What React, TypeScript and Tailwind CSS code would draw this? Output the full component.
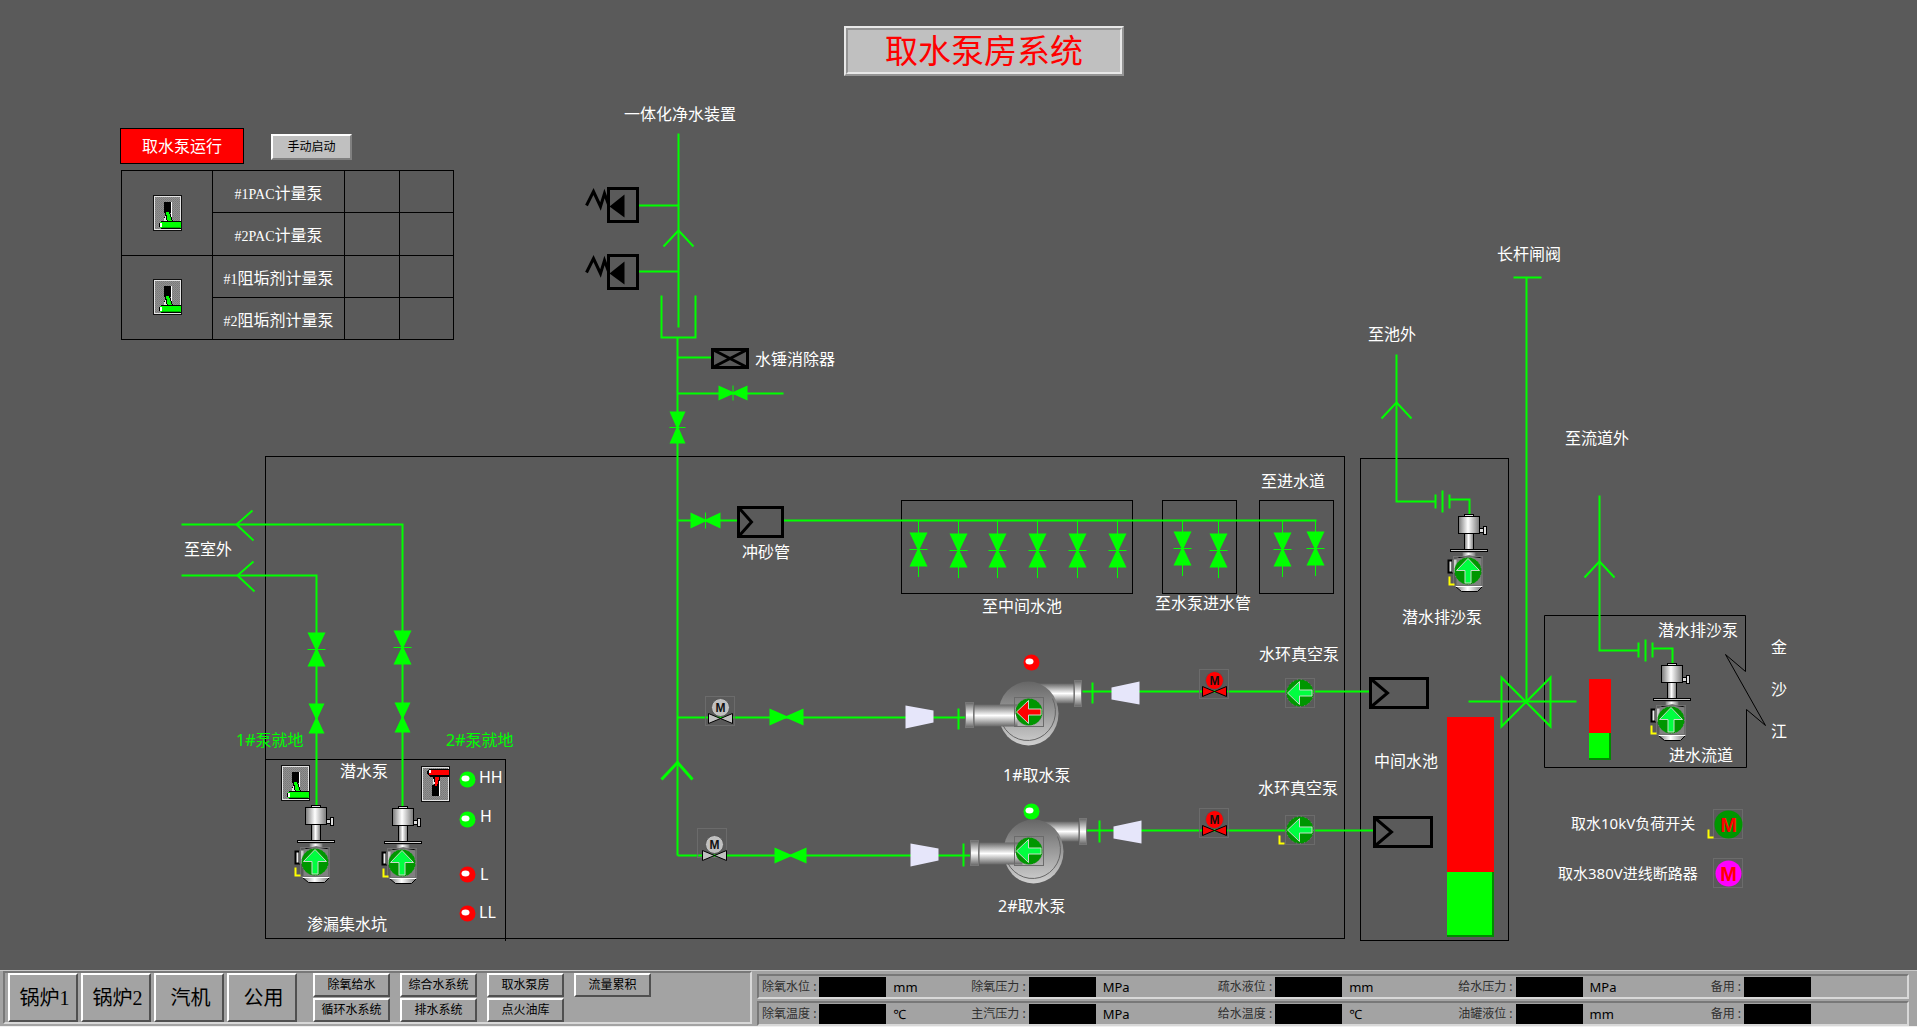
import React from "react";

const SANS = "font-['Noto_Sans','Noto_Sans_CJK_SC',sans-serif]";
const SONG = "font-['Liberation_Serif','Noto_Sans_CJK_SC',serif]";

/* ---------- symbols ---------- */

function SwitchIcon({ on }: { on: boolean }) {
  return (
    <svg width="29" height="36" viewBox="0 0 29 36" shapeRendering="crispEdges" aria-hidden="true">
      <rect width="29" height="36" fill="#101010" />
      <rect x="1" y="1" width="27" height="34" fill="#e4e4e4" />
      <rect x="2" y="2" width="25" height="32" fill="url(#dither)" />
      {on ? (
        <g>
          <rect x="11" y="7" width="7" height="11" fill="#000" />
          <rect x="18" y="7" width="1" height="20" fill="#fff" />
          <path d="M12 17h5l3 10h-9z" fill="#000" />
          <path d="M13 17h3l3 10h-4z" fill="#00ff00" />
          <path d="M12 19l2 8h-3z" fill="#e8e8e8" />
          <path d="M8 26h20v8H8l-2-2v-4z" fill="#000" />
          <rect x="7" y="27" width="21" height="6" fill="#00ff00" />
          <rect x="7" y="28" width="2" height="4" fill="#fff" />
          <rect x="9" y="32" width="18" height="1" fill="#00b000" />
        </g>
      ) : (
        <g>
          <rect x="11" y="19" width="7" height="11" fill="#000" />
          <rect x="18" y="8" width="1" height="22" fill="#fff" />
          <path d="M12 9h8l-3 12h-4z" fill="#000" />
          <path d="M14 9h5l-3 11h-2z" fill="#ff0000" />
          <path d="M12 11l2 7h-2z" fill="#e8e8e8" />
          <path d="M8 3h20v8H9l-3-3V5z" fill="#000" />
          <rect x="8" y="4" width="20" height="5" fill="#ff0000" />
          <rect x="8" y="4" width="2" height="3" fill="#fff" />
        </g>
      )}
    </svg>
  );
}

type XY = { x: number; y: number };

const ValveH = ({ x1, x2, y1, y2, tick }: { x1: number; x2: number; y1: number; y2: number; tick?: boolean }) => {
  const cx = (x1 + x2) / 2;
  const cy = (y1 + y2) / 2;
  return (
    <g fill="#00ff00">
      <path d={`M${x1} ${y1}L${cx} ${cy - 1}L${x2} ${y1}V${y2}L${cx} ${cy + 1}L${x1} ${y2}z`} />
      {tick && <path d={`M${cx} ${y1}V${y2}`} stroke="#00ff00" />}
    </g>
  );
};

const ValveV = ({ x, y, w = 9, h = 17, tick = true }: XY & { w?: number; h?: number; tick?: boolean }) => (
  <g fill="#00ff00">
    <path d={`M${x - w} ${y - h}H${x + w}L${x + 1} ${y}L${x + w} ${y + h}H${x - w}L${x - 1} ${y}z`} />
    {tick && <path d={`M${x - w} ${y}H${x + w}`} stroke="#00ff00" />}
  </g>
);

const Up = ({ x, y }: XY) => <path d={`M${x - 15} ${y + 16}L${x} ${y}L${x + 15} ${y + 16}`} />;

const Led = ({ x, y, color }: XY & { color: string }) => (
  <g>
    <circle cx={x} cy={y} r="8" fill={color} />
    <ellipse cx={x - 2} cy={y - 1} rx="4" ry="3" fill="#fff" />
  </g>
);

const LowFlag = ({ x, y }: XY) => (
  <path d={`M${x} ${y}v8h5`} fill="none" stroke="#ffff00" strokeWidth="2" />
);

const ArrowDisc = ({ x, y, color = "#00ff40", up, frame = "#6b6b6b" }: XY & { color?: string; up?: boolean; frame?: string }) => (
  <g transform={`translate(${x} ${y})`}>
    <rect width="29" height="29" fill="none" stroke={frame} />
    <circle cx="14.5" cy="14.5" r="13.5" fill="#009600" />
    <circle cx="14.5" cy="14.5" r="13.5" fill="none" stroke="#808080" strokeDasharray="1 3" />
    <path
      d="M2 14.5L14 3V11.5H26.5V17.5H14V26z"
      transform={up ? "rotate(90 14.5 14.5)" : undefined}
      fill={color}
      stroke="#c8d8c8"
    />
  </g>
);

const MotorValve = ({ x, y, color }: XY & { color: string }) => (
  <g transform={`translate(${x} ${y})`}>
    <path d="M3 17L15 22L27 17V27L15 22L3 27z" fill={color} stroke="#000" />
    <circle cx="15" cy="11" r="9" fill={color} stroke="#555" />
    <text x="15" y="15" textAnchor="middle" className="font-['Liberation_Sans',sans-serif] text-[12px] font-bold" fill="#101010">
      M
    </text>
  </g>
);

const Frame = ({ x, y }: XY) => <rect x={x} y={y} width="29" height="29" fill="none" stroke="#6b6b6b" />;

const Reducer = ({ x, y, flip }: XY & { flip?: boolean }) => (
  <path
    d={flip ? `M${x} ${y + 6}L${x + 28} ${y}V${y + 23}L${x} ${y + 18}z` : `M${x} ${y}L${x + 28} ${y + 5}V${y + 17}L${x} ${y + 23}z`}
    fill="#e6e6fa"
  />
);

const SubmersiblePump = ({ x, y, flag = -2 }: XY & { flag?: number }) => (
  <g transform={`translate(${x} ${y})`}>
    <rect x="14" y="0" width="9" height="3" fill="#ddd" stroke="#000" />
    <rect x="29" y="14" width="5" height="4" fill="#ddd" stroke="#000" />
    <rect x="33" y="12" width="3" height="8" fill="#ddd" stroke="#000" />
    <rect x="8" y="2" width="21" height="17" fill="url(#metalX)" stroke="#000" />
    <rect x="14" y="19" width="9" height="17" fill="url(#metalX)" stroke="#000" />
    <rect x="0" y="35" width="37" height="2" fill="#ccc" stroke="#000" />
    <rect x="12" y="38" width="13" height="4" fill="url(#metalX)" />
    <rect x="-2" y="46" width="4" height="12" fill="#eee" stroke="#000" strokeWidth="2" />
    <rect x="2" y="45" width="5" height="13" fill="#ccc" />
    <path d="M6 44q12 -4 25 0v27h-25z" fill="#808080" />
    <path d="M8 43q10 -3 22 0" fill="none" stroke="#000" />
    <path d="M5 72H32L27 77H11z" fill="url(#metalX)" stroke="#000" />
    <path d="M5 72H32" stroke="#fff" />
    <ArrowDisc x={3} y={42} up frame="#707070" />
    <LowFlag x={flag} y={62} />
  </g>
);

const MainPump = ({ x, y }: XY) => (
  <g transform={`translate(${x} ${y})`}>
    <path d="M64 3H108V23H70z" fill="url(#metalY)" />
    <rect x="109" y="0" width="7" height="26" fill="url(#metalY)" stroke="#777" />
    <ellipse cx="63" cy="33" rx="30" ry="32" fill="url(#casing)" />
    <path d="M87 18A27 28 0 1 1 37 44" fill="none" stroke="#666" />
    <rect x="9" y="24" width="43" height="22" fill="url(#metalY)" />
    <rect x="0" y="22" width="8" height="25" fill="url(#metalY)" stroke="#777" />
  </g>
);

const ReliefValve = ({ x, y }: XY) => (
  <g transform={`translate(${x} ${y})`} fill="none" stroke="#000" strokeWidth="3">
    <rect x="1" y="1" width="29" height="33" />
    <path d="M-21 18L-14 4L-7 19L-3 6L1 17" />
    <path d="M2 19L17 7V30z" fill="#000" stroke="none" />
  </g>
);

const Strainer = ({ x, y, w, h, tip }: XY & { w: number; h: number; tip: number }) => (
  <g fill="none" stroke="#000" strokeWidth="3">
    <rect x={x} y={y} width={w} height={h} />
    <path d={`M${x + 1} ${y + 1}L${x + tip} ${y + h / 2}L${x + 1} ${y + h - 1}`} />
  </g>
);

const Breaker = ({ x, y, fill, r }: XY & { fill: string; r: number }) => (
  <g transform={`translate(${x} ${y})`}>
    <rect width="29" height="29" fill="none" stroke="#6b6b6b" />
    <circle cx="15" cy="15" r={r} fill={fill} />
    <text x="15" y="22" textAnchor="middle" className="font-['Liberation_Sans',sans-serif] text-[20px] font-bold" fill="#ff0000">
      M
    </text>
  </g>
);

const Tank = ({ x, y, w, h, level }: XY & { w: number; h: number; level: number }) => (
  <g shapeRendering="crispEdges">
    <rect x={x} y={y} width={w} height={h - level} fill="#ff0000" />
    <rect x={x} y={y + h - level} width={w} height={level} fill="#008c00" />
    <rect x={x} y={y + h - level} width={w - 2} height={level - 2} fill="#00ff00" />
  </g>
);

/* ---------- pipework ---------- */

const dropValves = [
  [918, 549], [958, 550], [997, 550], [1037, 550], [1077, 550], [1117, 550],
  [1182, 548], [1218, 550], [1282, 549], [1315, 548],
];

function Diagram() {
  return (
    <svg className="absolute left-0 top-0 h-[970px] w-[1917px]" viewBox="0 0 1917 970" role="img" aria-label="取水泵房工艺流程">
      <defs>
        <linearGradient id="metalX">
          <stop offset="0" stopColor="#777" />
          <stop offset="0.45" stopColor="#fff" />
          <stop offset="1" stopColor="#777" />
        </linearGradient>
        <linearGradient id="metalY" x2="0" y2="1">
          <stop offset="0" stopColor="#666" />
          <stop offset="0.5" stopColor="#fff" />
          <stop offset="1" stopColor="#666" />
        </linearGradient>
        <linearGradient id="casing" x2="0" y2="1">
          <stop offset="0" stopColor="#666" />
          <stop offset="1" stopColor="#d0d0d0" />
        </linearGradient>
        <pattern id="dither" width="2" height="2" patternUnits="userSpaceOnUse">
          <rect width="2" height="2" fill="#909090" />
          <rect width="1" height="1" fill="#787878" />
          <rect x="1" y="1" width="1" height="1" fill="#808080" />
        </pattern>
      </defs>
      <g transform="translate(.5 .5)">
        {/* building outlines */}
        <g fill="none" stroke="#000" shapeRendering="crispEdges">
          <rect x="265" y="456" width="1079" height="482" />
          <path d="M265 759H505V940" />
          <rect x="901" y="500" width="231" height="93" />
          <rect x="1162" y="500" width="74" height="93" />
          <rect x="1259" y="500" width="74" height="93" />
          <rect x="1360" y="458" width="148" height="482" />
        </g>
        <path d="M1745 671V615H1544V767H1746V709L1765 725L1725 654L1745 671" fill="none" stroke="#000" />

        {/* pipes */}
        <g fill="none" stroke="#00ff00" strokeWidth="2">
          <path d="M678 133V327M638 205H678M638 271H678M661 295V337H695V295" />
          <path d="M677 337V855M677 357H711M677 393H783M677 520H737M783 520H1316" />
          <path d="M181 524H402V807M181 575H316V807" />
          <path d="M252 510L236 524L253 540M253 561L237 575L254 591" />
          <path d="M677 717H965M677 855H970M1082 691H1369M1086 830H1373" />
          <path d="M1396 354V501H1435M1449 499H1469V516M1435 494V508M1442 490V512M1449 494V508" />
          <path d="M1599 495V650H1638M1652 648H1672V665M1638 642V657M1645 639V661M1652 642V657" />
          <path d="M1513 277H1541M1526 277V701M1468 701H1576" />
          <path d="M1501 677L1550 726V677L1501 726z" />
          <path d="M661 779L677 762L692 779" strokeWidth="3" />
          <path d="M958 708V729M963 843V866M1092 682V703M1099 820V842" />
          <Up x={678} y={230} />
          <Up x={1396} y={402} />
          <Up x={1599} y={561} />
        </g>
        <path
          d={dropValves.map(([x, y]) => `M${x} 520V${y + 27}`).join("")}
          stroke="#00ff00"
          shapeRendering="crispEdges"
        />
        {dropValves.map(([x, y]) => <ValveV key={x} x={x} y={y} />)}

        <ValveH x1={718} x2={747} y1={385} y2={400} tick />
        <ValveH x1={690} x2={720} y1={512} y2={528} tick />
        <ValveH x1={769} x2={803} y1={708} y2={725} />
        <ValveH x1={774} x2={806} y1={847} y2={863} />
        <ValveV x={677} y={427} w={8} h={16} />
        <ValveV x={316} y={649} />
        <ValveV x={402} y={647} />
        <ValveV x={316} y={718} w={8} h={15} tick={false} />
        <ValveV x={402} y={717} w={8} h={15} tick={false} />

        <ReliefValve x={607} y={187} />
        <ReliefValve x={607} y={254} />
        <g fill="none" stroke="#000" strokeWidth="3">
          <rect x="712" y="349" width="35" height="18" />
          <path d="M712 349L747 367M747 349L712 367" />
        </g>
        <Strainer x={738} y={507} w={44} h={29} tip={13} />
        <Strainer x={1370} y={678} w={57} h={29} tip={17} />
        <Strainer x={1374} y={817} w={57} h={29} tip={17} />

        <Reducer x={905} y={705} />
        <Reducer x={910} y={843} />
        <Reducer x={1111} y={681} flip />
        <Reducer x={1113} y={820} flip />

        <Frame x={705} y={696} />
        <MotorValve x={705} y={696} color="#c0c0c0" />
        <Frame x={697} y={828} />
        <MotorValve x={699} y={833} color="#c0c0c0" />
        <Frame x={1199} y={669} />
        <MotorValve x={1199} y={669} color="#ff0000" />
        <Frame x={1199} y={808} />
        <MotorValve x={1199} y={808} color="#ff0000" />

        <MainPump x={965} y={680} />
        <MainPump x={970} y={818} />
        <ArrowDisc x={1014} y={697} color="#ff0000" />
        <ArrowDisc x={1014} y={836} />
        <ArrowDisc x={1285} y={678} />
        <ArrowDisc x={1285} y={815} />
        <LowFlag x={1279} y={835} />

        <SubmersiblePump x={297} y={805} />
        <SubmersiblePump x={384} y={806} flag={-1} />
        <SubmersiblePump x={1450} y={514} flag={-1} />
        <SubmersiblePump x={1653} y={663} />

        <Led x={1031} y={662} color="#ff0000" />
        <Led x={1031} y={811} color="#00ff00" />
        <Led x={467} y={779} color="#00ff00" />
        <Led x={467} y={819} color="#00ff00" />
        <Led x={467} y={874} color="#ff0000" />
        <Led x={467} y={913} color="#ff0000" />

        <Tank x={1446} y={716} w={47} h={220} level={65} />
        <Tank x={1588} y={678} w={22} h={81} level={27} />

        <Breaker x={1713} y={809} fill="#009600" r={14} />
        <Breaker x={1713} y={858} fill="#ff00ff" r={13} />
        <LowFlag x={1708} y={829} />
      </g>
    </svg>
  );
}

/* ---------- captions on the diagram ---------- */

const captions: [string, string][] = [
  ["一体化净水装置", "left-[624px] top-[103px] text-white"],
  ["水锤消除器", "left-[755px] top-[348px] text-white"],
  ["至室外", "left-[184px] top-[538px] text-white"],
  ["1#泵就地", "left-[236px] top-[729px] text-[#00ff00]"],
  ["2#泵就地", "left-[446px] top-[729px] text-[#00ff00]"],
  ["潜水泵", "left-[340px] top-[760px] text-white"],
  ["HH", "left-[479px] top-[766px] text-white"],
  ["H", "left-[480px] top-[805px] text-white"],
  ["L", "left-[480px] top-[863px] text-white"],
  ["LL", "left-[479px] top-[901px] text-white"],
  ["渗漏集水坑", "left-[307px] top-[913px] text-white"],
  ["冲砂管", "left-[742px] top-[541px] text-white"],
  ["至中间水池", "left-[982px] top-[595px] text-white"],
  ["至水泵进水管", "left-[1155px] top-[592px] text-white"],
  ["至进水道", "left-[1261px] top-[470px] text-white"],
  ["1#取水泵", "left-[1003px] top-[764px] text-white"],
  ["2#取水泵", "left-[998px] top-[895px] text-white"],
  ["水环真空泵", "left-[1259px] top-[643px] text-white"],
  ["水环真空泵", "left-[1258px] top-[777px] text-white"],
  ["长杆闸阀", "left-[1497px] top-[243px] text-white"],
  ["至池外", "left-[1368px] top-[323px] text-white"],
  ["至流道外", "left-[1565px] top-[427px] text-white"],
  ["潜水排沙泵", "left-[1402px] top-[606px] text-white"],
  ["中间水池", "left-[1374px] top-[750px] text-white"],
  ["潜水排沙泵", "left-[1658px] top-[619px] text-white"],
  ["进水流道", "left-[1669px] top-[744px] text-white"],
  ["金", "left-[1771px] top-[636px] text-white"],
  ["沙", "left-[1771px] top-[678px] text-white"],
  ["江", "left-[1771px] top-[720px] text-white"],
];

const ratings: [string, string][] = [
  ["取水10kV负荷开关", "left-[1571px] top-[812px]"],
  ["取水380V进线断路器", "left-[1558px] top-[862px]"],
];

/* ---------- dosing pump panel ---------- */

const cell = "border border-black p-0 text-center";

function DosingTable() {
  const groups = [
    { name: "PAC计量泵", latin: "PAC", rest: "计量泵" },
    { name: "阻垢剂计量泵", latin: "", rest: "阻垢剂计量泵" },
  ];
  return (
    <table className={`mt-[6px] ml-px h-[170px] w-[333px] table-fixed border-collapse text-base leading-6 text-white ${SONG}`}>
      <colgroup>
        <col className="w-[91px]" />
        <col className="w-[132px]" />
        <col className="w-[55px]" />
        <col className="w-[54px]" />
      </colgroup>
      <tbody>
        {groups.map((g) =>
          [1, 2].map((n) => (
            <tr key={g.name + n}>
              {n === 1 && (
                <td rowSpan={2} className={cell}>
                  <button type="button" aria-label={g.name + "切换"} className="mx-auto block">
                    <SwitchIcon on />
                  </button>
                </td>
              )}
              <td className="border border-black px-0 pt-[5px] pb-0 text-center">
                <span className="text-sm">#{n}{g.latin}</span>
                {g.rest}
              </td>
              <td className={cell} />
              <td className={cell} />
            </tr>
          ))
        )}
      </tbody>
    </table>
  );
}

/* ---------- bottom bar ---------- */

const raised = "border-2 border-t-white border-l-white border-r-[#505050] border-b-[#505050] bg-[#a3a3a3] text-black";
const sunken = "border-2 border-t-[#787878] border-l-[#787878] border-r-[#d8d8d8] border-b-[#d8d8d8]";

const units = ["锅炉1", "锅炉2", "汽机", "公用"];
const screens = ["除氧给水", "综合水系统", "取水泵房", "流量累积", "循环水系统", "排水系统", "点火油库"];

const readings = [
  [
    ["除氧水位", "mm"], ["除氧压力", "MPa"], ["疏水液位", "mm"], ["给水压力", "MPa"], ["备用", ""],
  ],
  [
    ["除氧温度", "℃"], ["主汽压力", "MPa"], ["给水温度", "℃"], ["油罐液位", "mm"], ["备用", ""],
  ],
];

function Readings({ row, items }: { row: number; items: string[][] }) {
  return (
    <div className={`grid flex-1 grid-cols-[209fr_246fr_240fr_252fr_196fr] items-center pl-[3px] ${sunken}`}>
      {items.map(([label, unit], i) => (
        <div key={i} className="flex items-center text-[13px] leading-5">
          <label htmlFor={`r${row}-${i}`} className="mr-[3px] text-xs leading-5 whitespace-nowrap text-[#303030]">
            {label} :
          </label>
          <input id={`r${row}-${i}`} readOnly className="h-5 w-[67px] bg-black px-1 text-right text-xs text-[#00ff00] outline-none" />
          <span className="ml-[7px] text-black">{unit}</span>
        </div>
      ))}
    </div>
  );
}

export default function App() {
  return (
    <div className={`flex min-h-screen flex-col bg-[#5a5a5a] ${SANS}`}>
      <main className="relative min-h-[945px] flex-1 overflow-hidden">
        <Diagram />
        {captions.map(([text, at], i) => (
          <span key={i} className={`absolute text-base leading-[22px] whitespace-nowrap ${at}`}>{text}</span>
        ))}
        {ratings.map(([text, at]) => (
          <span key={text} className={`absolute text-[15px] leading-[22px] whitespace-nowrap text-white ${at}`}>{text}</span>
        ))}
        <button type="button" aria-label="1#泵就地切换" className="absolute left-[281px] top-[765px]">
          <SwitchIcon on />
        </button>
        <button type="button" aria-label="2#泵就地切换" className="absolute left-[421px] top-[766px]">
          <SwitchIcon on={false} />
        </button>

        <header className="relative flex justify-center pt-[26px] pl-[51px]">
          <h1 className={`flex h-[50px] w-[280px] items-center justify-center border-4 border-[#e8e8e8] bg-[#c0c0c0] pt-[2px] text-[33px] leading-10 whitespace-nowrap text-[#ff0000] [border-style:ridge] ${SONG}`}>
            取水泵房系统
          </h1>
        </header>
        <section className="relative mt-[52px] ml-[120px] w-fit" aria-label="加药泵控制">
          <div className="flex items-center">
            <div className="flex h-9 w-[124px] items-center justify-center border border-black bg-[#ff0000] text-base leading-6 text-white">
              取水泵运行
            </div>
            <button type="button" className="mt-px ml-[27px] h-[26px] w-[81px] border-2 border-t-white border-r-[#808080] border-b-[#808080] border-l-white bg-[#c0c0c0] text-xs leading-5 text-black">
              手动启动
            </button>
          </div>
          <DosingTable />
        </section>
      </main>

      <footer className="flex border-t border-b border-t-[#c8c8c8] border-b-[#f0f0f0] bg-[#a3a3a3] pr-2 pl-[3px]">
        <nav className={`mb-[2px] flex w-[749px] shrink-0 pl-[3px] ${sunken}`}>
          <div className="flex gap-[3px]">
            {units.map((u) => (
              <button key={u} type="button" className={`h-[49px] w-[70px] pl-[3px] text-xl leading-7 ${raised} ${SONG}`}>{u}</button>
            ))}
          </div>
          <div className="ml-4 grid grid-cols-4 content-start gap-x-[10px] gap-y-px">
            {screens.map((s) => (
              <button key={s} type="button" className={`h-6 w-[77px] text-xs leading-4 ${raised}`}>{s}</button>
            ))}
          </div>
        </nav>
        <div className="ml-[5px] flex flex-1 flex-col gap-[2px] pt-[3px]">
          <Readings row={1} items={readings[0]} />
          <Readings row={2} items={readings[1]} />
        </div>
      </footer>
    </div>
  );
}
